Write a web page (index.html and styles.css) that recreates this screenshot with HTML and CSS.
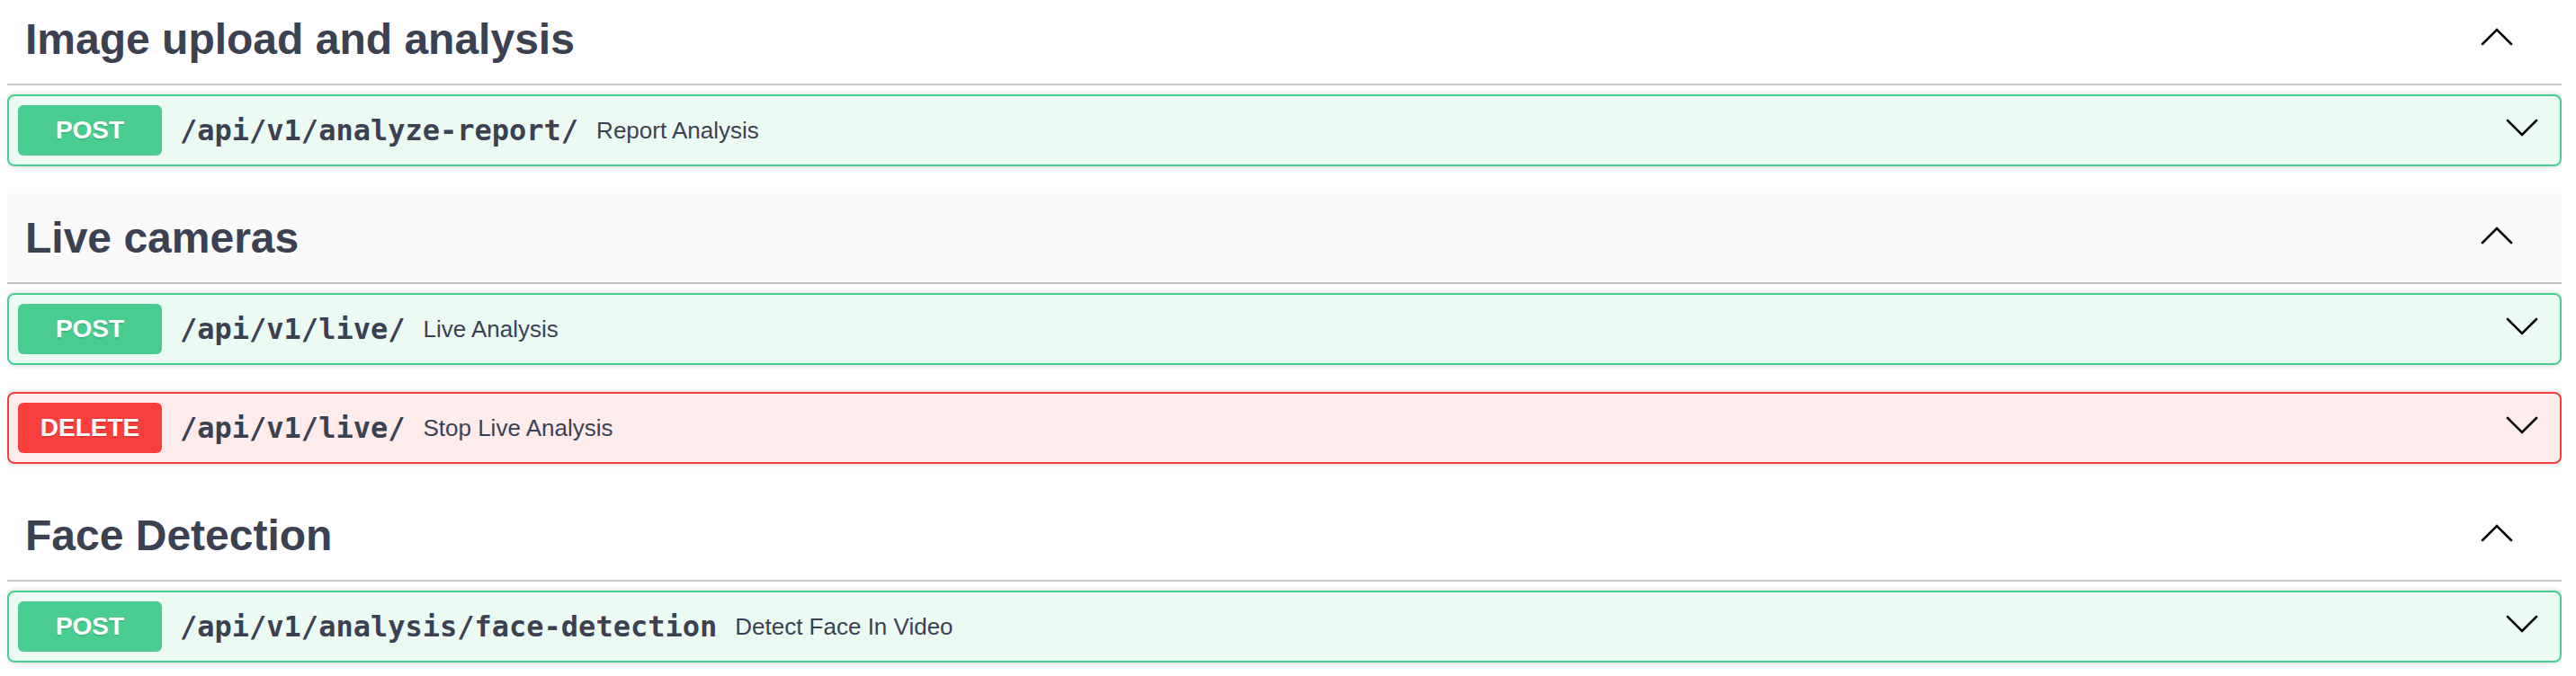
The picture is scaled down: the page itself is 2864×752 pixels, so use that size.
FILE: index.html
```html
<!DOCTYPE html>
<html lang="en">
<head>
<meta charset="utf-8">
<title>API operations</title>
<link rel="stylesheet" href="styles.css">
</head>
<body>
<div class="ops">
  <section class="tag-section">
    <h3 class="tag">
      <span class="tag-name">Image upload and analysis</span>
      <button class="expand" aria-label="Collapse operation">
        <svg class="arrow up" viewBox="0 0 40 40" width="40" height="40"><polyline points="4,28 20,12 36,28"/></svg>
      </button>
    </h3>
    <div class="opblock post">
      <div class="summary">
        <span class="method">POST</span>
        <span class="path">/api/v1/analyze-report/</span>
        <span class="desc">Report Analysis</span>
        <svg class="arrow down" viewBox="0 0 40 40" width="40" height="40"><polyline points="4,12 20,28 36,12"/></svg>
      </div>
    </div>
  </section>

  <section class="tag-section">
    <h3 class="tag hover">
      <span class="tag-name">Live cameras</span>
      <button class="expand" aria-label="Collapse operation">
        <svg class="arrow up" viewBox="0 0 40 40" width="40" height="40"><polyline points="4,28 20,12 36,28"/></svg>
      </button>
    </h3>
    <div class="opblock post">
      <div class="summary">
        <span class="method">POST</span>
        <span class="path">/api/v1/live/</span>
        <span class="desc">Live Analysis</span>
        <svg class="arrow down" viewBox="0 0 40 40" width="40" height="40"><polyline points="4,12 20,28 36,12"/></svg>
      </div>
    </div>
    <div class="opblock delete">
      <div class="summary">
        <span class="method">DELETE</span>
        <span class="path">/api/v1/live/</span>
        <span class="desc">Stop Live Analysis</span>
        <svg class="arrow down" viewBox="0 0 40 40" width="40" height="40"><polyline points="4,12 20,28 36,12"/></svg>
      </div>
    </div>
  </section>

  <section class="tag-section">
    <h3 class="tag">
      <span class="tag-name">Face Detection</span>
      <button class="expand" aria-label="Collapse operation">
        <svg class="arrow up" viewBox="0 0 40 40" width="40" height="40"><polyline points="4,28 20,12 36,28"/></svg>
      </button>
    </h3>
    <div class="opblock post">
      <div class="summary">
        <span class="method">POST</span>
        <span class="path">/api/v1/analysis/face-detection</span>
        <span class="desc">Detect Face In Video</span>
        <svg class="arrow down" viewBox="0 0 40 40" width="40" height="40"><polyline points="4,12 20,28 36,12"/></svg>
      </div>
    </div>
  </section>
</div>
</body>
</html>
```
FILE: styles.css
```css
html, body {
  background: #ffffff;
}
body {
  margin: 0 16px 0 8px;
  font-family: "Liberation Sans", Arial, sans-serif;
  color: #3b4151;
}
.ops {
  margin-top: -6px;
}
.tag {
  display: flex;
  align-items: center;
  margin: 0 0 10px;
  padding: 20px 40px 20px 20px;
  border-bottom: 2px solid rgba(59, 65, 81, 0.3);
  font-size: 48px;
  line-height: 59px;
  font-weight: 700;
  color: #3b4151;
}
.tag.hover {
  background: rgba(0, 0, 0, 0.02);
}
.tag-name {
  flex: 1 1 auto;
}
.expand {
  display: flex;
  border: none;
  background: none;
  padding: 0;
  margin: 0 12px 5px 0;
}
.arrow {
  display: block;
  fill: none;
  stroke: #000000;
  stroke-width: 2.6;
  stroke-linecap: round;
  stroke-linejoin: miter;
}
.opblock {
  margin: 0 0 30px;
  border: 2px solid #000;
  border-radius: 8px;
  box-shadow: 0 0 6px rgba(0, 0, 0, 0.19);
}
.opblock.post {
  background: rgba(73, 204, 144, 0.1);
  border-color: #49cc90;
}
.opblock.delete {
  background: rgba(249, 62, 62, 0.1);
  border-color: #f93e3e;
}
.summary {
  display: flex;
  align-items: center;
  padding: 10px;
}
.method {
  min-width: 160px;
  padding: 12px 0;
  border-radius: 6px;
  font-size: 28px;
  line-height: 32px;
  font-weight: 700;
  text-align: center;
  color: #ffffff;
  text-shadow: 0 2px 0 rgba(0, 0, 0, 0.1);
}
.post .method {
  background: #49cc90;
}
.delete .method {
  background: #f93e3e;
}
.path {
  padding: 0 20px;
  font-family: "DejaVu Sans Mono", "Liberation Mono", monospace;
  font-size: 32px;
  font-weight: 700;
  color: #3b4151;
}
.desc {
  flex: 1 1 auto;
  font-size: 26px;
  color: #3b4151;
}
.summary .arrow {
  margin: 0 12px 6px 0;
}
```
